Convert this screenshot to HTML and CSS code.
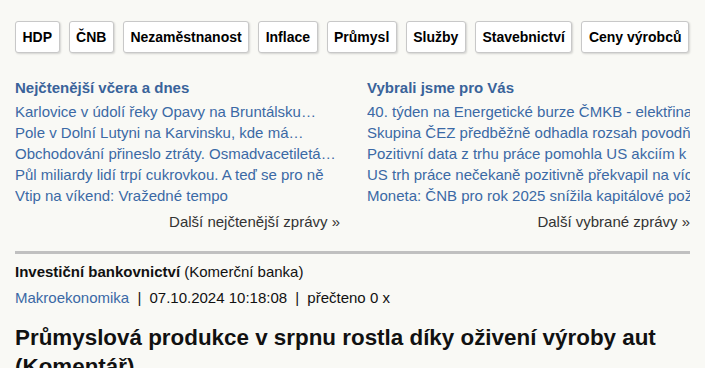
FILE: index.html
```html
<!DOCTYPE html>
<html lang="cs">
<head>
    <meta charset="UTF-8">
    <meta name="viewport" content="width=device-width, initial-scale=1.0">
    <title>Průmyslová produkce v srpnu rostla</title>
    <link rel="stylesheet" href="styles.css">
</head>
<body>
    <div class="page">
        <nav class="topic-nav">
            <a href="#" class="topic-btn">HDP</a>
            <a href="#" class="topic-btn">ČNB</a>
            <a href="#" class="topic-btn">Nezaměstnanost</a>
            <a href="#" class="topic-btn">Inflace</a>
            <a href="#" class="topic-btn">Průmysl</a>
            <a href="#" class="topic-btn">Služby</a>
            <a href="#" class="topic-btn">Stavebnictví</a>
            <a href="#" class="topic-btn">Ceny výrobců</a>
        </nav>

        <div class="news-columns">
            <div class="news-box">
                <h3 class="news-title">Nejčtenější včera a dnes</h3>
                <ul class="news-list">
                    <li><a href="#">Karlovice v údolí řeky Opavy na Bruntálsku…</a></li>
                    <li><a href="#">Pole v Dolní Lutyni na Karvinsku, kde má…</a></li>
                    <li><a href="#">Obchodování přineslo ztráty. Osmadvacetiletá…</a></li>
                    <li><a href="#">Půl miliardy lidí trpí cukrovkou. A teď se pro ně</a></li>
                    <li><a href="#">Vtip na víkend: Vražedné tempo</a></li>
                </ul>
                <a href="#" class="more-link">Další nejčtenější zprávy »</a>
            </div>
            <div class="news-box">
                <h3 class="news-title">Vybrali jsme pro Vás</h3>
                <ul class="news-list">
                    <li><a href="#">40. týden na Energetické burze ČMKB - elektřina</a></li>
                    <li><a href="#">Skupina ČEZ předběžně odhadla rozsah povodňových škod</a></li>
                    <li><a href="#">Pozitivní data z trhu práce pomohla US akciím k růstu</a></li>
                    <li><a href="#">US trh práce nečekaně pozitivně překvapil na více frontách</a></li>
                    <li><a href="#">Moneta: ČNB pro rok 2025 snížila kapitálové požadavky</a></li>
                </ul>
                <a href="#" class="more-link">Další vybrané zprávy »</a>
            </div>
        </div>

        <hr class="divider">

        <div class="article-head">
            <div class="article-source"><strong>Investiční bankovnictví</strong> (Komerční banka)</div>
            <div class="article-meta">
                <a href="#">Makroekonomika</a>
                <span class="sep">|</span>
                07.10.2024 10:18:08
                <span class="sep">|</span>
                přečteno 0 x
            </div>
            <h1 class="article-title">Průmyslová produkce v srpnu rostla díky oživení výroby aut (Komentář)</h1>
        </div>
    </div>
</body>
</html>
```

FILE: styles.css
```css
:root {
    --bg: #f9f9f5;
    --link-blue: #3b69a5;
    --head-blue: #39639a;
    --text: #111;
    --border-gray: #c8c8c8;
}

body {
    margin: 0;
    padding: 0;
    font-family: 'Liberation Sans', Arial, sans-serif;
    background: var(--bg);
    color: var(--text);
}

a {
    text-decoration: none;
}

.page {
    padding: 21px 15px 0;
}

.topic-nav {
    display: flex;
    gap: 9px;
}

.topic-btn {
    display: flex;
    align-items: center;
    height: 30px;
    padding: 0 6.5px;
    background: white;
    border: 1px solid var(--border-gray);
    border-radius: 3px;
    box-shadow: 1px 1px 2px rgba(0,0,0,0.15);
    color: #000;
    font-size: 14px;
    font-weight: bold;
    white-space: nowrap;
}

.news-columns {
    display: grid;
    grid-template-columns: 325px 323px;
    gap: 27px;
    margin-top: 25px;
}

.news-box {
    display: flex;
    flex-direction: column;
    min-width: 0;
}

.news-title {
    margin: 0 0 3px;
    color: var(--head-blue);
    font-size: 15px;
    line-height: 20px;
}

.news-list {
    list-style: none;
    margin: 0;
    padding: 0;
}

.news-list li {
    white-space: nowrap;
    overflow: hidden;
    line-height: 21px;
    font-size: 15px;
}

.news-list a {
    color: var(--link-blue);
}

.more-link {
    align-self: flex-end;
    margin-top: 6px;
    color: #333;
    font-size: 15px;
    line-height: 20px;
}

.divider {
    margin: 19px 0 0;
    border: none;
    height: 3px;
    background: #c0c0c0;
}

.article-head {
    padding-top: 8px;
}

.article-source {
    font-size: 15px;
    line-height: 20px;
}

.article-meta {
    margin-top: 6px;
    font-size: 15px;
    line-height: 20px;
    color: #111;
}

.article-meta a {
    color: var(--link-blue);
}

.sep {
    margin: 0 4px;
}

.article-title {
    margin: 15px 0 0;
    font-size: 22.4px;
    line-height: 29px;
    font-weight: bold;
}
```
